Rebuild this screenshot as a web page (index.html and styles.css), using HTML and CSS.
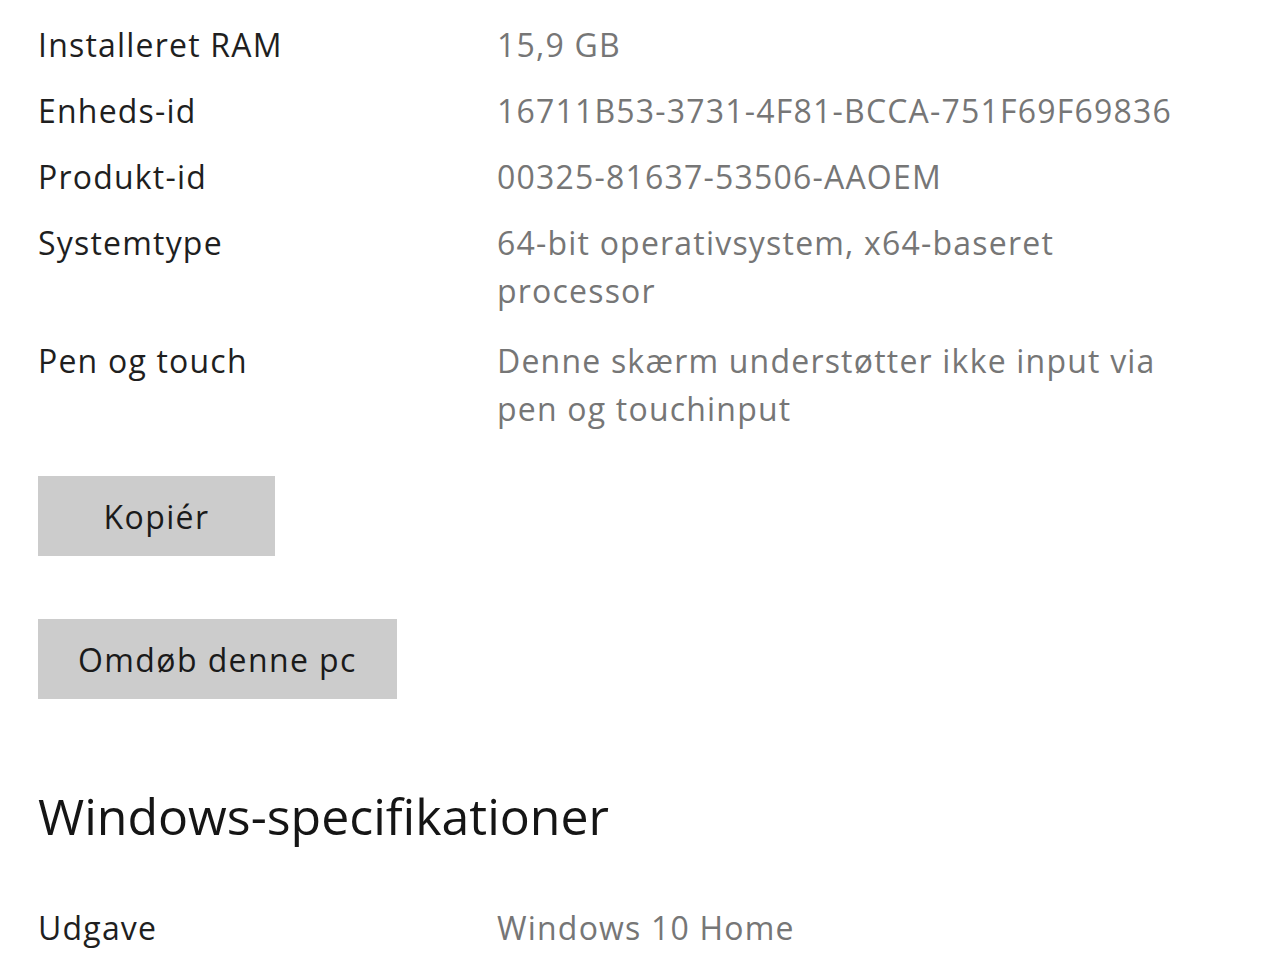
FILE: index.html
```html
<!DOCTYPE html>
<html lang="da">
<head>
<meta charset="utf-8">
<title>Om</title>
<link rel="stylesheet" href="styles.css">
</head>
<body>
<main class="page">
  <section class="specs">
    <div class="row"><div class="label">Installeret RAM</div><div class="value">15,9 GB</div></div>
    <div class="row"><div class="label">Enheds-id</div><div class="value">16711B53-3731-4F81-BCCA-751F69F69836</div></div>
    <div class="row"><div class="label">Produkt-id</div><div class="value">00325-81637-53506-AAOEM</div></div>
    <div class="row"><div class="label">Systemtype</div><div class="value">64-bit operativsystem, x64-baseret processor</div></div>
    <div class="row row-after-wrap"><div class="label">Pen og touch</div><div class="value">Denne skærm understøtter ikke input via pen og touchinput</div></div>
  </section>
  <div class="actions">
    <button class="btn btn-copy">Kopiér</button>
    <button class="btn">Omdøb denne pc</button>
  </div>
  <h2 class="heading">Windows-specifikationer</h2>
  <section class="specs">
    <div class="row"><div class="label">Udgave</div><div class="value">Windows 10 Home</div></div>
  </section>
</main>
</body>
</html>
```
FILE: styles.css
```css
html, body {
  margin: 0;
  padding: 0;
  background: #ffffff;
}
body {
  font-family: "Open Sans", "Noto Sans", sans-serif;
  color: #1c1c1c;
  overflow: hidden;
}
.page {
  padding: 21px 0 0 38px;
}
.specs {
  display: flex;
  flex-direction: column;
  gap: 18px;
}
.row {
  display: grid;
  grid-template-columns: 459px 690px;
  font-size: 32px;
  line-height: 48px;
  letter-spacing: 1.2px;
}
.row-after-wrap {
  padding-top: 4px;
}
.label {
  color: #1f1f1f;
}
.value {
  color: #767676;
}
.actions {
  display: flex;
  flex-direction: column;
  align-items: flex-start;
  gap: 63px;
  margin-top: 43px;
}
.btn {
  font-family: inherit;
  font-size: 32px;
  letter-spacing: 1.4px;
  color: #1a1a1a;
  background: #cccccc;
  border: none;
  border-radius: 0;
  height: 80px;
  min-width: 237px;
  padding: 0 40px;
}
.heading {
  margin: 81px 0 52px;
  font-weight: 400;
  font-size: 50px;
  line-height: 72px;
  color: #151515;
}
```
